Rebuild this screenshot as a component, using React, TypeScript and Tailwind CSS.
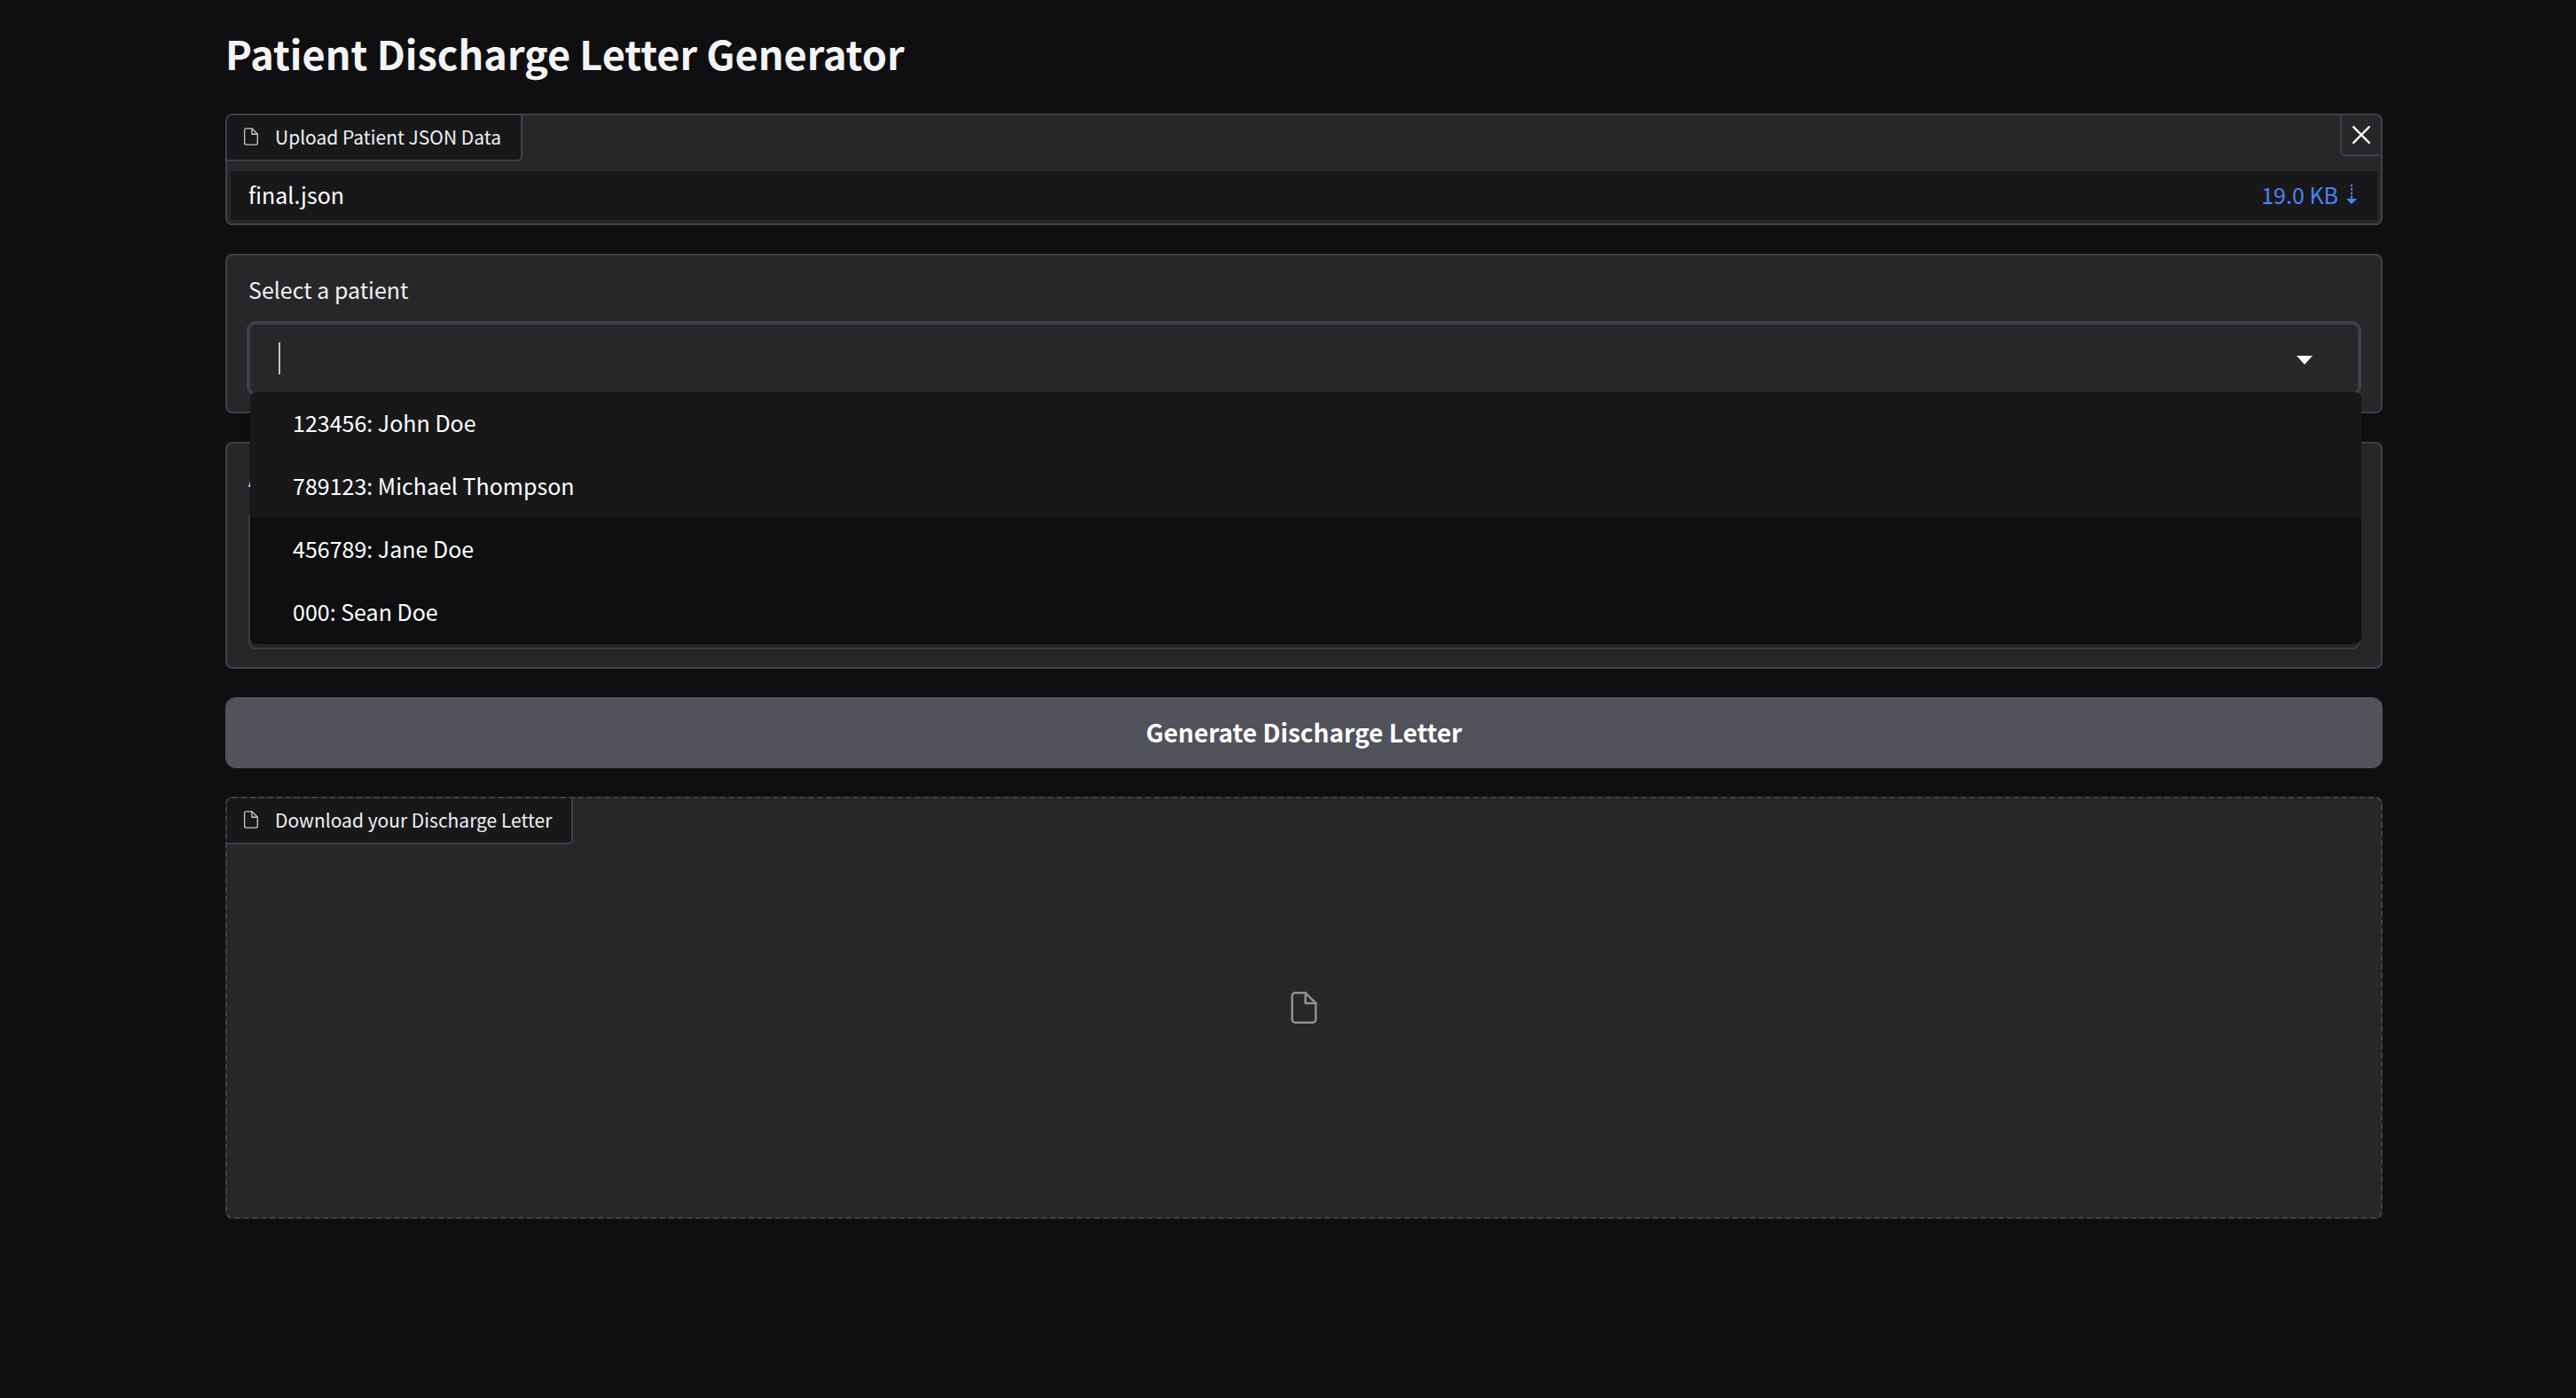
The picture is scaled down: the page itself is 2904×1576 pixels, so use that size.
import React from "react";

const patients = [
  { id: "123456", name: "John Doe" },
  { id: "789123", name: "Michael Thompson" },
  { id: "456789", name: "Jane Doe" },
  { id: "000", name: "Sean Doe" },
];

function FileIcon({ className }: { className: string }) {
  return (
    <svg
      className={className}
      viewBox="0 0 24 24"
      fill="none"
      stroke="currentColor"
      strokeWidth="1.5"
      strokeLinecap="round"
      strokeLinejoin="round"
      aria-hidden="true"
    >
      <path d="M13 2H6a2 2 0 0 0-2 2v16a2 2 0 0 0 2 2h12a2 2 0 0 0 2-2V9z" />
      <polyline points="13 2 13 9 20 9" />
    </svg>
  );
}

function BlockLabel({ children }: { children: React.ReactNode }) {
  return (
    <h2 className="flex h-[52px] items-center rounded-br-md border-r-2 border-b-2 border-[#3f3f46] bg-[#18181a] pr-[22px] pb-0.5 pl-4 text-[21px] leading-8 text-[#f0f0f2]">
      <FileIcon className="mr-4 h-[22px] w-[22px] text-[#c4c4c8]" />
      {children}
    </h2>
  );
}

function UploadBlock() {
  return (
    <section className="overflow-hidden rounded-lg border-2 border-[#3f3f46] bg-[#27272a]">
      <div className="flex items-start justify-between">
        <BlockLabel>Upload Patient JSON Data</BlockLabel>
        <button
          type="button"
          aria-label="Clear"
          className="flex h-[46px] w-[46px] items-center justify-center rounded-bl-md border-b-2 border-l-2 border-[#3f3f46] text-[#f4f4f5]"
        >
          <svg className="h-5 w-5" viewBox="0 0 20 20" stroke="currentColor" strokeWidth="2.4" strokeLinecap="round" aria-hidden="true">
            <path d="M1.2 1.2 18.8 18.8M18.8 1.2 1.2 18.8" />
          </svg>
        </button>
      </div>
      <div className="mt-[11px] mb-1 pr-1 pl-1">
        <table className="w-full bg-[#18181a] text-[25px] leading-8">
          <tbody>
            <tr className="h-[55px]">
              <td className="pb-1 pl-5 text-white">final.json</td>
              <td className="pr-[23px] pb-1">
                <a href="#final.json" className="flex items-center justify-end gap-[9px] text-[#4b83f2]">
                  19.0 KB
                  <svg className="h-6 w-3" viewBox="0 0 12 24" fill="currentColor" aria-hidden="true">
                    <path d="M5 1h2v2.4H5zM5 5h2v2.8H5zM5 9.4h2v2.8H5zM5 13.6h2V17h5l-6 6-6-6h5z" />
                  </svg>
                </a>
              </td>
            </tr>
          </tbody>
        </table>
      </div>
    </section>
  );
}

function PatientSelect() {
  return (
    <section className="rounded-lg border-2 border-[#3f3f46] bg-[#27272a] px-6 py-5">
      <label htmlFor="patient" className="mb-5 block text-[25px] leading-9 text-[#f0f0f2]">
        Select a patient
      </label>
      <div className="relative">
        <div className="flex h-20 items-center rounded-lg border-2 border-[#3f3f46] bg-[#27272a] pr-[50px] pl-8 ring-2 ring-[#3f3f46]">
          <span className="h-9 w-0.5 bg-[#c4c4c8]" />
          <input
            id="patient"
            role="combobox"
            aria-expanded="true"
            aria-controls="patient-options"
            autoComplete="off"
            className="h-full min-w-0 flex-1 bg-transparent text-[25px] text-[#f4f4f5] outline-none"
          />
          <svg className="h-5 w-5" viewBox="0 0 20 20" fill="#fafafa" aria-hidden="true">
            <path d="M1 7h18l-9 10z" />
          </svg>
        </div>
        <ul
          id="patient-options"
          role="listbox"
          className="absolute top-[78px] left-0.5 z-10 w-full overflow-hidden rounded-lg bg-[#0f0f11] text-[25px] text-white shadow-lg"
        >
          {patients.map((p, i) => (
            <li
              key={p.id}
              role="option"
              aria-selected={false}
              className={i < 2 ? "h-[71px] bg-[#18181a] pl-12 leading-[68px]" : "h-[71px] pl-12 leading-[68px]"}
            >
              {p.id}: {p.name}
            </li>
          ))}
        </ul>
      </div>
    </section>
  );
}

function NotesBlock() {
  return (
    <section className="rounded-lg border-2 border-[#3f3f46] bg-[#27272a] px-6 py-5">
      <label htmlFor="notes" className="mb-5 block text-[25px] leading-9 text-[#f0f0f2]">
        A
      </label>
      <textarea
        id="notes"
        className="block h-[156px] w-full resize-none rounded-lg border-2 border-[#3f3f46] bg-[#27272a] p-5 text-[25px] text-[#f4f4f5] outline-none"
      />
    </section>
  );
}

function DownloadBlock() {
  return (
    <section className="flex h-[476px] flex-col items-start overflow-hidden rounded-lg border-2 border-dashed border-[#3f3f46] bg-[#27272a]">
      <BlockLabel>Download your Discharge Letter</BlockLabel>
      <div className="flex w-full flex-1 items-center justify-center pb-[52px]">
        <FileIcon className="h-10 w-10 text-[#8f8f92]" />
      </div>
    </section>
  );
}

export default function App() {
  return (
    <main className="flex min-h-screen flex-col gap-8 bg-[#0f0f11] pt-8 pr-[218px] pb-16 pl-[254px] font-['Noto_Sans_CJK_SC',sans-serif]">
      <h1 className="pb-2 text-[45px] leading-[56px] font-bold text-[#f4f4f5]">Patient Discharge Letter Generator</h1>
      <UploadBlock />
      <PatientSelect />
      <NotesBlock />
      <button type="button" className="h-20 rounded-xl bg-[#52525b] pb-0.5 text-[28px] leading-10 font-bold text-white">
        Generate Discharge Letter
      </button>
      <DownloadBlock />
    </main>
  );
}
